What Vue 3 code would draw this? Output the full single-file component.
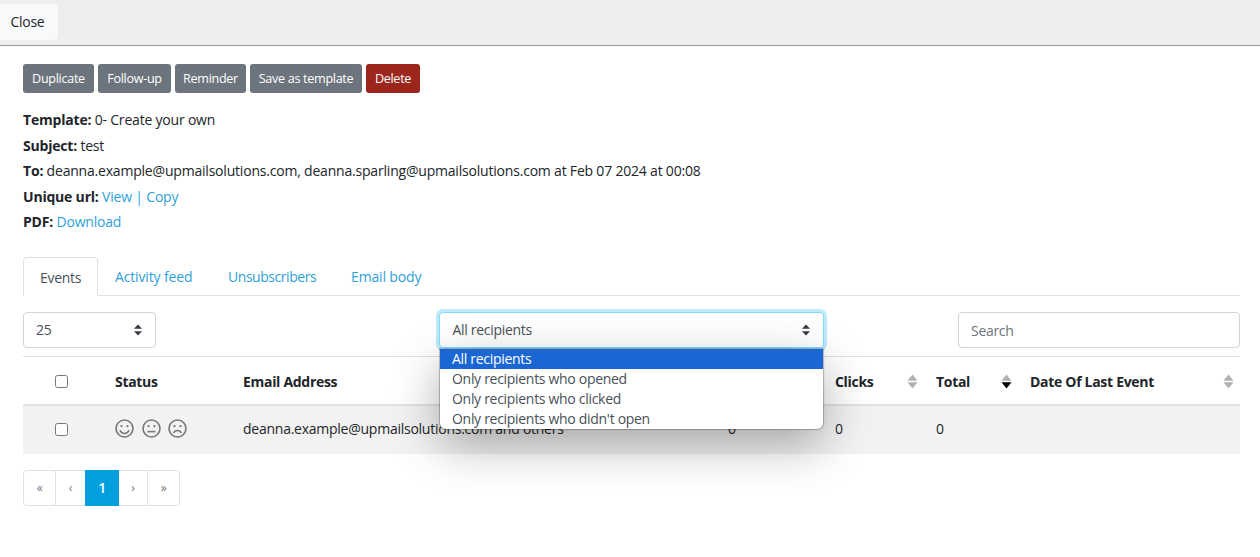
<script setup>
const actions = [
  { label: 'Duplicate', width: 71 },
  { label: 'Follow-up', width: 73 },
  { label: 'Reminder', width: 71 },
  { label: 'Save as template', width: 112 },
  { label: 'Delete', width: 54, danger: true }
];

const tabs = ['Events', 'Activity feed', 'Unsubscribers', 'Email body'];

const recipientOptions = [
  'All recipients',
  'Only recipients who opened',
  'Only recipients who clicked',
  "Only recipients who didn't open"
];

const columns = [
  { label: 'Opens', gap: 2 },
  { label: 'Clicks', gap: 2 },
  { label: 'Total', gap: 2, active: true },
  { label: 'Date Of Last Event', gap: 6 }
];

const pages = ['«', '‹', '1', '›', '»'];
</script>

<template>
  <div class="page">
    <div class="top-bar">
      <button class="close-btn">Close</button>
    </div>

    <div class="content">
      <div class="actions">
        <button
          v-for="action in actions"
          :key="action.label"
          class="action-btn"
          :class="{ danger: action.danger }"
          :style="{ width: `${action.width}px` }"
        >{{ action.label }}</button>
      </div>

      <div class="details">
        <div><b>Template:</b> 0- Create your own</div>
        <div><b>Subject:</b> test</div>
        <div><b>To:</b> deanna.example@upmailsolutions.com, deanna.sparling@upmailsolutions.com at Feb 07 2024 at 00:08</div>
        <div><b>Unique url:</b> <a>View</a> <span class="link-sep">|</span> <a>Copy</a></div>
        <div><b>PDF:</b> <a>Download</a></div>
      </div>

      <div class="tabs">
        <div
          v-for="(tab, index) in tabs"
          :key="tab"
          class="tab"
          :class="{ active: index === 0 }"
        >{{ tab }}</div>
      </div>

      <div class="controls">
        <div class="select page-size">
          <span>25</span>
          <svg class="caret" width="10" height="12" viewBox="0 0 10 12"><path d="M5 0.5 9 4.8H1zM5 11.5 1 7.2h8z" /></svg>
        </div>

        <div class="recipient-wrap">
          <div class="select recipients">
            <span>All recipients</span>
            <svg class="caret" width="10" height="12" viewBox="0 0 10 12"><path d="M5 0.5 9 4.8H1zM5 11.5 1 7.2h8z" /></svg>
          </div>
          <div class="dropdown">
            <div
              v-for="(option, index) in recipientOptions"
              :key="option"
              class="option"
              :class="{ selected: index === 0 }"
            >{{ option }}</div>
          </div>
        </div>

        <input class="search" type="text" placeholder="Search" />
      </div>

      <table class="events">
        <colgroup>
          <col class="col-check" />
          <col class="col-status" />
          <col class="col-email" />
          <col class="col-opens" />
          <col class="col-clicks" />
          <col class="col-total" />
          <col class="col-date" />
        </colgroup>
        <thead>
          <tr>
            <th class="check-cell"><input type="checkbox" /></th>
            <th>Status</th>
            <th>Email Address</th>
            <th v-for="col in columns" :key="col.label">
              <div class="th-inner">
                <span>{{ col.label }}</span>
                <svg class="sort" :style="{ marginRight: `${col.gap - 4}px` }" width="11" height="15" viewBox="0 0 11 15">
                  <path d="M5.500 0.500 10.500 6.800H0.500z" fill="#b0b0b0" />
                  <path d="M5.500 14.500 0.500 8.200H10.500z" :fill="col.active ? '#000' : '#b0b0b0'" />
                </svg>
              </div>
            </th>
          </tr>
        </thead>
        <tbody>
          <tr>
            <td class="check-cell"><input type="checkbox" /></td>
            <td>
              <div class="faces">
                <svg width="19" height="19" viewBox="0 0 19 19">
                  <circle cx="9.500" cy="9.500" r="8.500" />
                  <circle class="eye" cx="6.500" cy="7.200" r="1.100" />
                  <circle class="eye" cx="12.500" cy="7.200" r="1.100" />
                  <path d="M5 11.200c1 2.400 2.700 3.300 4.500 3.300s3.500-.9 4.500-3.300" />
                </svg>
                <svg width="19" height="19" viewBox="0 0 19 19">
                  <circle cx="9.500" cy="9.500" r="8.500" />
                  <circle class="eye" cx="6.500" cy="7.200" r="1.100" />
                  <circle class="eye" cx="12.500" cy="7.200" r="1.100" />
                  <path d="M5.500 12.600h8" />
                </svg>
                <svg width="19" height="19" viewBox="0 0 19 19">
                  <circle cx="9.500" cy="9.500" r="8.500" />
                  <circle class="eye" cx="6.500" cy="7.200" r="1.100" />
                  <circle class="eye" cx="12.500" cy="7.200" r="1.100" />
                  <path d="M5.500 14c.8-1.700 2.200-2.500 4-2.500s3.200.8 4 2.500" />
                </svg>
              </div>
            </td>
            <td>deanna.example@upmailsolutions.com and others</td>
            <td>0</td>
            <td>0</td>
            <td>0</td>
            <td></td>
          </tr>
        </tbody>
      </table>

      <div class="pagination">
        <div
          v-for="(page, index) in pages"
          :key="index"
          class="page-item"
          :class="{ current: page === '1' }"
        >{{ page }}</div>
      </div>
    </div>
  </div>
</template>

<style>
html,
body {
  margin: 0;
  background: #fff;
}
</style>

<style scoped>
.page {
  height: 557px;
  overflow: hidden;
  font-family: "Open Sans", "Noto Sans", sans-serif;
  font-size: 14px;
  letter-spacing: -0.3px;
  color: #212529;
}

.top-bar {
  height: 45px;
  background: #eee;
  border-bottom: 1px solid #999;
}

.close-btn {
  display: block;
  position: relative;
  top: 4px;
  width: 58px;
  height: 36px;
  padding: 0 3px 2px 0;
  border: 0;
  border-radius: 0 4px 4px 0;
  background: #f8f9fa;
  font: inherit;
  letter-spacing: inherit;
  color: #212529;
}

.content {
  padding: 18px 20px 0 23px;
}

.actions {
  display: flex;
  gap: 4px;
}

.action-btn {
  height: 29px;
  padding: 0 0 1px;
  border: 0;
  border-radius: 3px;
  background: #6c757d;
  color: #fff;
  font: inherit;
  font-size: 12.6px;
  letter-spacing: -0.3px;
  white-space: nowrap;
}

.action-btn.danger {
  background: #9c251c;
}

.details {
  margin-top: 14.4px;
  line-height: 25.5px;
  letter-spacing: -0.2px;
}

.details a,
.link-sep {
  color: #2f9fd8;
}

.tabs {
  display: grid;
  grid-template-columns: 75px 113px 123px auto;
  margin-top: 22.1px;
  height: 38px;
  border-bottom: 1px solid #dee2e6;
  letter-spacing: -0.15px;
}

.tab {
  padding-left: 17px;
  height: 38px;
  line-height: 40px;
  color: #2f9fd8;
  white-space: nowrap;
}

.tab:nth-child(3) {
  letter-spacing: -0.45px;
}

.tab.active {
  box-sizing: border-box;
  height: 39px;
  padding-left: 16px;
  color: #495057;
  background: #fff;
  border: 1px solid #dee2e6;
  border-bottom-color: #fff;
  border-radius: 4px 4px 0 0;
  letter-spacing: -0.3px;
}

.controls {
  display: flex;
  justify-content: space-between;
  margin-top: 16px;
}

.select {
  box-sizing: border-box;
  height: 36px;
  display: flex;
  align-items: center;
  justify-content: space-between;
  padding: 0 12px;
  background: #fff;
  border: 1px solid #ced4da;
  border-radius: 4px;
  color: #495057;
}

.select span {
  margin-bottom: 1px;
}

.page-size {
  width: 133px;
}

.recipient-wrap {
  position: relative;
  width: 385px;
  margin-left: 148px;
}

.recipients {
  padding-left: 13px;
  border-color: #7fdcfb;
  box-shadow: 0 0 0 3px rgba(3, 169, 244, 0.25);
}

.caret {
  fill: #343a40;
}

.dropdown {
  position: absolute;
  z-index: 5;
  top: 37px;
  left: 1px;
  width: 383px;
  height: 80px;
  overflow: hidden;
  background: #fff;
  border-radius: 0 0 6px 6px;
  box-shadow: 0 0 1px 1px rgba(0, 0, 0, 0.25), 0 16px 48px rgba(0, 0, 0, 0.32);
}

.option {
  height: 20px;
  line-height: 20px;
  padding-left: 12.5px;
  color: #495057;
}

.option.selected {
  background: #1a67d4;
  color: #fff;
}

.search {
  box-sizing: border-box;
  width: 282px;
  height: 36px;
  padding: 1px 12px 0;
  border: 1px solid #ced4da;
  border-radius: 4px;
  font: inherit;
  letter-spacing: inherit;
  outline: none;
}

.search::placeholder {
  color: #6c757d;
}

.events {
  width: 1217px;
  margin-top: 8px;
  border-collapse: collapse;
  table-layout: fixed;
}

.col-check { width: 76px; }
.col-status { width: 128px; }
.col-email { width: 485px; }
.col-opens { width: 107px; }
.col-clicks { width: 101px; }
.col-total { width: 94px; }
.col-date { width: 226px; }

.events th {
  height: 49px;
  padding: 1px 4px 0 16px;
  box-sizing: border-box;
  text-align: left;
  font-weight: 700;
  border-top: 1px solid #dee2e6;
  border-bottom: 2px solid #dee2e6;
}

.events td {
  height: 49px;
  box-sizing: border-box;
  padding: 0 16px 4px;
  background: #f2f2f2;
  letter-spacing: -0.25px;
}

.events td.check-cell {
  padding: 0 0 5px;
  text-align: center;
}

.events th.check-cell {
  padding: 0 0 1px;
  text-align: center;
}

.check-cell input {
  margin: 0;
  vertical-align: middle;
}

.th-inner {
  display: flex;
  align-items: center;
  justify-content: space-between;
}

.faces {
  display: flex;
  gap: 7.500px;
  width: 74px;
  padding-top: 1px;
}

.faces svg {
  fill: none;
  stroke: #777;
  stroke-width: 1.600;
}

.faces .eye {
  fill: #777;
  stroke: none;
}

.pagination {
  display: inline-flex;
  margin-top: 16px;
  border: 1px solid #dee2e6;
  border-radius: 4px;
  height: 34px;
  line-height: 34px;
  font-size: 12px;
}

.page-item {
  width: 29px;
  text-align: center;
  color: #6c757d;
  border-left: 1px solid #dee2e6;
}

.page-item:first-child {
  width: 31px;
  border-left: 0;
}

.page-item.current {
  width: 34px;
  margin: -1px 0;
  height: 36px;
  line-height: 36px;
  font-size: 14px;
  font-weight: 600;
  border-left: 0;
  background: #039fdf;
  color: #fff;
}

.page-item.current + .page-item {
  border-left: 0;
  width: 28px;
}

.page-item:last-child {
  width: 31px;
}
</style>
